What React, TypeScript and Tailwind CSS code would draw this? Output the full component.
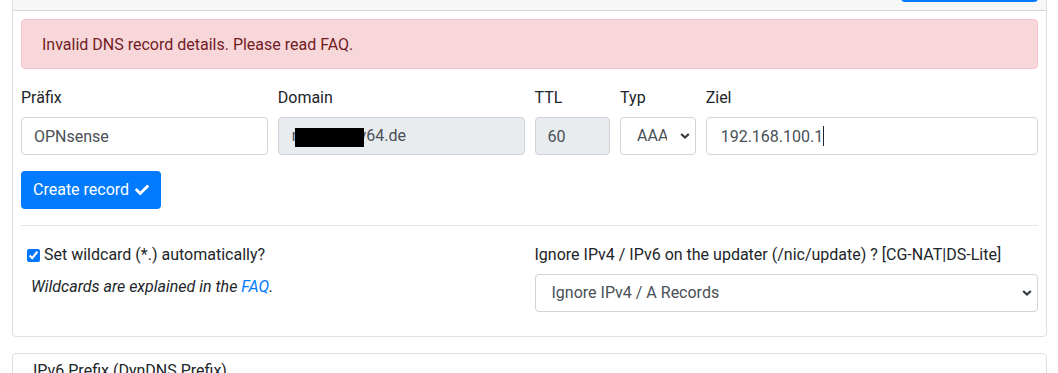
import { FaCheck } from "react-icons/fa";

const inputCls =
  "block w-full h-[38px] px-3 border border-[#ced4da] rounded-[4px] text-[16px] text-[#495057] leading-6 outline-none";

const Chevron = () => (
  <svg
    className="pointer-events-none absolute right-[6px] top-1/2 -translate-y-1/2"
    width="10"
    height="7"
    viewBox="0 0 10 7"
  >
    <path d="M1.2 1.5l3.8 3.6L8.8 1.5" fill="none" stroke="#343a40" strokeWidth="2.2" />
  </svg>
);

const App = () => {
  return (
    <div
      className="h-[373px] overflow-hidden bg-white text-[#212529] text-[16px] leading-6"
      style={{ fontFamily: "Roboto, 'Liberation Sans', sans-serif" }}
    >
      <div className="-mt-[45px] pl-[12px] pr-[11px]">
        {/* record card */}
        <div className="border border-[rgba(0,0,0,0.125)] rounded-[4px]">
          <div className="flex items-center justify-between bg-[rgba(0,0,0,0.03)] border-b border-[rgba(0,0,0,0.125)] p-2">
            <span className="pl-3">DNS Records</span>
            <button className="h-[38px] w-[137px] bg-[#007bff] text-white rounded-[4px]">
              Add record
            </button>
          </div>
          <div className="p-2">
            <div className="border border-[#f5c6cb] bg-[#f8d7da] text-[#721c24] rounded-[4px] px-5 pt-[13px] pb-[11px] mb-4">
              Invalid DNS record details. Please read FAQ.
            </div>

            <div className="flex -mx-[5px]">
              <div className="w-3/12 px-[5px] mb-4">
                <label className="block pt-[1px] -mb-[1px]">Präfix</label>
                <input className={inputCls + " bg-white mt-2"} defaultValue="OPNsense" />
              </div>
              <div className="w-3/12 px-[5px] mb-4">
                <label className="block pt-[1px] -mb-[1px]">Domain</label>
                <div className="mt-2 flex items-center h-[38px] pl-[13px] border border-[#ced4da] rounded-[4px] bg-[#e9ecef] text-[#495057]">
                  <span>n</span>
                  <span className="relative z-10 inline-block w-[69px] h-[19px] mt-[2px] bg-black -ml-[6px]" />
                  <span className="-ml-[5px]">v64.de</span>
                </div>
              </div>
              <div className="w-1/12 px-[5px] mb-4">
                <label className="block pt-[1px] -mb-[1px]">TTL</label>
                <input
                  className={inputCls + " bg-[#e9ecef] mt-2"}
                  defaultValue="60"
                  disabled
                />
              </div>
              <div className="w-1/12 px-[5px] mb-4">
                <label className="block pt-[1px] -mb-[1px]">Typ</label>
                <div className="relative mt-2">
                  <select className="block w-full h-[38px] pl-[16px] pr-[28px] border border-[#ced4da] rounded-[4px] bg-white text-[#495057] appearance-none outline-none">
                    <option>AAAA</option>
                  </select>
                  <Chevron />
                </div>
              </div>
              <div className="w-4/12 px-[5px] mb-4">
                <label className="block pt-[1px] -mb-[1px]">Ziel</label>
                <div className="relative mt-2">
                  <input
                    className={inputCls + " bg-white pl-[14px]"}
                    defaultValue="192.168.100.1"
                  />
                  <span className="pointer-events-none absolute left-[117px] top-[9px] w-px h-[20px] bg-[#212529]" />
                </div>
              </div>
            </div>

            <button className="flex items-center gap-[6px] h-[38px] px-3 bg-[#007bff] text-white rounded-[4px]">
              Create record <FaCheck className="text-[14px]" />
            </button>

            <hr className="mt-4 mb-4 border-0 border-t border-[rgba(0,0,0,0.1)]" />

            <div className="flex -mx-[5px]">
              <div className="w-6/12 px-[5px]">
                <label className="flex items-center pl-[6px] pt-[1px]">
                  <input
                    type="checkbox"
                    defaultChecked
                    className="w-[13px] h-[13px] mr-[4px] accent-[#0075ff]"
                  />
                  Set wildcard (*.) automatically?
                </label>
                <p className="mt-[8px] pl-[10px] italic">
                  Wildcards are explained in the{" "}
                  <a className="text-[#007bff]">FAQ</a>.
                </p>
              </div>
              <div className="w-6/12 px-[5px] mb-4">
                <label className="block pt-[1px] -mb-[1px]">
                  Ignore IPv4 / IPv6 on the updater (/nic/update) ? [CG-NAT|DS-Lite]
                </label>
                <div className="relative mt-2">
                  <select className="block w-full h-[38px] pl-[16px] pr-[28px] border border-[#ced4da] rounded-[4px] bg-white text-[#495057] appearance-none outline-none">
                    <option>Ignore IPv4 / A Records</option>
                  </select>
                  <Chevron />
                </div>
              </div>
            </div>
          </div>
        </div>

        {/* prefix card */}
        <div className="mt-4 border border-[rgba(0,0,0,0.125)] rounded-[4px] px-5 pt-[5px] pb-[11px]">
          IPv6 Prefix (DynDNS Prefix)
        </div>
      </div>
    </div>
  );
};

export default App;
